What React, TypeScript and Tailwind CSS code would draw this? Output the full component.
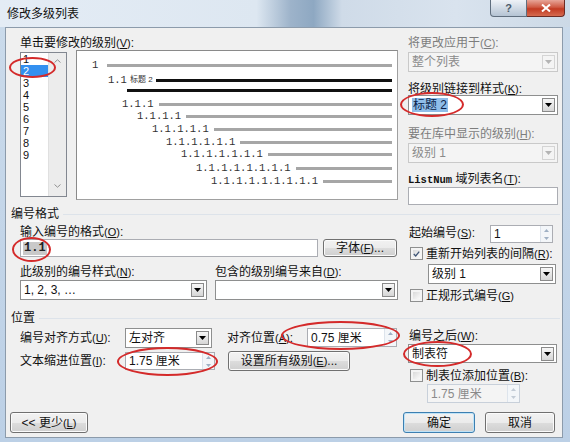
import React from "react";

const FONT = "font-['Liberation_Sans','Noto_Sans_CJK_SC',sans-serif]";

function Acc({ k }: { k: string }) {
  return (
    <span className="text-[11px]">
      (<span className="underline">{k}</span>)
    </span>
  );
}

function Label({
  text,
  k,
  disabled,
  className = "",
  colon = true,
}: {
  text: React.ReactNode;
  k: string;
  disabled?: boolean;
  className?: string;
  colon?: boolean;
}) {
  return (
    <div
      className={`h-[12px] leading-[12px] text-[12px] whitespace-nowrap ${
        disabled ? "text-[#7d7d7d]" : "text-[#111]"
      } ${className}`}
    >
      {text}
      <Acc k={k} />
      {colon ? ":" : ""}
    </div>
  );
}

function DropBtn({ disabled }: { disabled?: boolean }) {
  return (
    <div
      className={`w-[13px] h-[14px] mr-[2px] shrink-0 flex items-center justify-center border ${
        disabled
          ? "border-[#d4d4d4] bg-[#f4f4f4]"
          : "border-[#8a8a8a] bg-linear-to-b from-[#f7f7f7] to-[#d6d6d6]"
      }`}
    >
      <svg width="7" height="4" viewBox="0 0 7 4">
        <path d="M0 0H7L3.5 4Z" fill={disabled ? "#b4b4b4" : "#000"} />
      </svg>
    </div>
  );
}

function Combo({
  w,
  h,
  children,
  disabled,
  className = "",
}: {
  w: string;
  h: string;
  children?: React.ReactNode;
  disabled?: boolean;
  className?: string;
}) {
  return (
    <div
      className={`${w} ${h} ${className} shrink-0 flex items-center border ${
        disabled
          ? "border-[#c9c9c9] bg-[#f4f4f4] text-[#8a8a8a]"
          : "border-[#8e8f8f] bg-white text-[#111]"
      }`}
    >
      <div className="flex-1 pl-[3px] text-[12px] leading-[14px] whitespace-nowrap overflow-hidden">
        {children}
      </div>
      <DropBtn disabled={disabled} />
    </div>
  );
}

function Spin({
  w,
  h,
  text,
  disabled,
  className = "",
}: {
  w: string;
  h: string;
  text: string;
  disabled?: boolean;
  className?: string;
}) {
  const c = disabled ? "#c3ccd6" : "#9fb0c4";
  return (
    <div
      className={`${w} ${h} ${className} shrink-0 flex items-center border ${
        disabled
          ? "border-[#c8d0da] bg-[#f4f4f4] text-[#8a8a8a]"
          : "border-[#abadb3] bg-white text-[#111]"
      }`}
    >
      <div className="flex-1 pl-[3px] text-[12px] leading-[12px] whitespace-nowrap overflow-hidden">
        {text}
      </div>
      <div className="w-[12px] h-full flex flex-col border-l border-[#dde4ec] bg-[#f3f6f9]">
        <div className="flex-1 flex items-center justify-center">
          <svg width="5" height="3" viewBox="0 0 5 3">
            <path d="M0 3H5L2.5 0Z" fill={c} />
          </svg>
        </div>
        <div className="flex-1 flex items-center justify-center">
          <svg width="5" height="3" viewBox="0 0 5 3">
            <path d="M0 0H5L2.5 3Z" fill={c} />
          </svg>
        </div>
      </div>
    </div>
  );
}

function Check({ checked }: { checked?: boolean }) {
  return (
    <div className="w-[13px] h-[13px] shrink-0 border border-[#8e8f8f] bg-[#f4f4f4] p-[2px]">
      <div className="w-full h-full bg-linear-to-br from-[#dadada] to-[#fafafa] flex items-center justify-center">
        {checked && (
          <svg width="9" height="8" viewBox="0 0 9 8">
            <path d="M1 4L3.5 6.5L8 1" stroke="#3f5576" strokeWidth="1.7" fill="none" />
          </svg>
        )}
      </div>
    </div>
  );
}

function Btn({
  w,
  h,
  children,
  def,
  className = "",
}: {
  w: string;
  h: string;
  children: React.ReactNode;
  def?: boolean;
  className?: string;
}) {
  return (
    <div
      className={`${w} ${h} ${className} shrink-0 rounded-[3px] border ${
        def
          ? "border-[#3c7fb1] shadow-[inset_0_0_0_1px_#bfe3f7]"
          : "border-[#707070] shadow-[inset_0_0_0_1px_#fbfbfb]"
      } bg-[linear-gradient(#f2f2f2,#ebebeb_50%,#dddddd_50%,#cfcfcf)] flex items-center justify-center text-[12px] leading-[12px] text-[#111] whitespace-nowrap`}
    >
      {children}
    </div>
  );
}

function Header({ text, className }: { text: string; className: string }) {
  return (
    <div className={`flex items-center h-[12px] ml-[5px] mr-[2px] ${className}`}>
      <div className="text-[12px] leading-[12px] text-[#111]">{text}</div>
      <div className="flex-1 h-px bg-[#dde3ea] ml-[4px]" />
    </div>
  );
}

function LevelRow({
  mt,
  pl,
  text,
}: {
  mt: string;
  pl: string;
  text: string;
}) {
  return (
    <div className={`flex items-center h-[12px] pr-[5px] ${mt} ${pl}`}>
      <span className="font-['Liberation_Mono',monospace] text-[10.5px] leading-[12px] text-[#333] whitespace-nowrap">
        {text}
      </span>
      <div className="flex-1 ml-[5px] h-[3px] bg-[#a6a6a6]" />
    </div>
  );
}

export default function App() {
  const ellipses = [
    "left-[9px] top-[57px] w-[47px] h-[21px]",
    "left-[400px] top-[92px] w-[64px] h-[25px]",
    "left-[12px] top-[237px] w-[39px] h-[25px]",
    "left-[281px] top-[321px] w-[119px] h-[29px]",
    "left-[117px] top-[347px] w-[101px] h-[29px]",
    "left-[403px] top-[341px] w-[69px] h-[26px]",
  ];

  return (
    <div
      className={`relative w-[570px] h-[442px] overflow-hidden bg-linear-to-b from-[#cbdbeb] to-[#bcd0e6] ${FONT} text-[12px] text-[#111]`}
    >
      {/* Title bar */}
      <div className="h-[27px] flex items-start bg-[linear-gradient(90deg,#e4ecf5_0%,#dde7f1_45%,#9db3ca_51%,#8ea8c2_55%,#cfdbe8_60%,#d9e3ee_80%,#ccd9e6_100%)]">
        <div className="ml-[7px] mt-[8px] leading-[12px] text-[12px] text-[#111]">
          修改多级列表
        </div>
        <div className="ml-auto mr-[5px] flex">
          <div className="w-[37px] h-[17px] border border-t-0 border-[#5f6e7e] rounded-bl-[4px] bg-linear-to-b from-[#eef2f7] to-[#b4c3d3] flex items-center justify-center text-[11px] font-bold text-[#4b5a6a] leading-[11px]">
            ?
          </div>
          <div className="w-[38px] h-[17px] border border-t-0 border-l-0 border-[#6d2b23] rounded-br-[4px] bg-[linear-gradient(#e7a598,#cf5a44_45%,#c23a22_55%,#d56a4f)] flex items-center justify-center">
            <svg width="10" height="8" viewBox="0 0 10 8">
              <path d="M1 0.5L9 7.5M9 0.5L1 7.5" stroke="#fff" strokeWidth="2" />
            </svg>
          </div>
        </div>
      </div>

      {/* Dialog body */}
      <div className="ml-[5px] w-[558px] h-[411px] border border-[#8c9bab] bg-[#f0f0f0] flex flex-col">
        {/* Top section */}
        <div className="flex items-start mt-[9px] ml-[14px]">
          <div className="w-[378px] shrink-0">
            <Label text="单击要修改的级别" k="V" />
            <div className="flex items-start mt-[1px]">
              <div className="mt-[2px] w-[47px] h-[145px] border border-[#828790] bg-white flex">
                <div className="w-[27px] flex flex-col">
                  {["1", "2", "3", "4", "5", "6", "7", "8", "9"].map((n) => (
                    <div
                      key={n}
                      className={`h-[12px] leading-[12px] pl-[2px] text-[11px] ${
                        n === "2" ? "bg-[#3390f0] text-white" : "text-[#111]"
                      }`}
                    >
                      {n}
                    </div>
                  ))}
                </div>
                <div className="flex-1 bg-[#ececec] border-l border-[#e0e0e0] flex flex-col items-center justify-between pt-[6px] pb-[8px]">
                  <svg width="7" height="4" viewBox="0 0 7 4">
                    <path d="M0.5 3.5L3.5 0.8L6.5 3.5" stroke="#909090" strokeWidth="1" fill="none" />
                  </svg>
                  <svg width="7" height="4" viewBox="0 0 7 4">
                    <path d="M0.5 0.5L3.5 3.2L6.5 0.5" stroke="#909090" strokeWidth="1" fill="none" />
                  </svg>
                </div>
              </div>
              <div className="ml-[9px] w-[322px] h-[150px] border border-[#a0a0a0] border-t-[#8a8a8a] border-l-[#8a8a8a] bg-white flex flex-col">
                <div className="flex items-center h-[12px] mt-[8px] pl-[15px] pr-[5px]">
                  <span className="font-['Liberation_Mono',monospace] text-[10.5px] leading-[12px] text-[#333]">
                    1
                  </span>
                  <div className="flex-1 ml-[9px] h-[3px] bg-[#a6a6a6]" />
                </div>
                <div className="flex items-center h-[12px] mt-[3px] pl-[31px] pr-[5px]">
                  <span className="font-['Liberation_Mono',monospace] text-[10.5px] leading-[12px] text-[#333]">
                    1.1
                  </span>
                  <span className="ml-[3px] text-[8px] leading-[12px] text-[#333] whitespace-nowrap">
                    标题 2
                  </span>
                  <div className="flex-1 ml-[3px] h-[3px] bg-[#111]" />
                </div>
                <div className="flex items-center h-[4px] mt-[2px] pl-[50px] pr-[5px]">
                  <div className="flex-1 h-[3px] bg-[#111]" />
                </div>
                <LevelRow mt="mt-[6px]" pl="pl-[45px]" text="1.1.1" />
                <LevelRow mt="mt-[0px]" pl="pl-[60px]" text="1.1.1.1" />
                <LevelRow mt="mt-[1px]" pl="pl-[75px]" text="1.1.1.1.1" />
                <LevelRow mt="mt-[1px]" pl="pl-[89px]" text="1.1.1.1.1.1" />
                <LevelRow mt="mt-[0px]" pl="pl-[104px]" text="1.1.1.1.1.1.1" />
                <LevelRow mt="mt-[2px]" pl="pl-[119px]" text="1.1.1.1.1.1.1.1" />
                <LevelRow mt="mt-[1px]" pl="pl-[134px]" text="1.1.1.1.1.1.1.1.1" />
              </div>
            </div>
          </div>

          <div className="ml-[10px] w-[150px] shrink-0 flex flex-col">
            <Label text="将更改应用于" k="C" disabled />
            <Combo w="w-[150px]" h="h-[20px]" className="mt-[3px]" disabled>
              整个列表
            </Combo>
            <Label text="将级别链接到样式" k="K" className="mt-[11px]" />
            <Combo w="w-[150px]" h="h-[20px]" className="mt-[0px]">
              <span className="bg-[#8fbde9] text-[#0b1f4a] px-[1px]">标题 2</span>
            </Combo>
            <Label text="要在库中显示的级别" k="H" disabled className="mt-[13px]" />
            <Combo w="w-[150px]" h="h-[20px]" className="mt-[3px]" disabled>
              级别 1
            </Combo>
            <Label
              text={
                <>
                  <span className="font-['Liberation_Mono',monospace] text-[10.5px] font-bold">ListNum</span>{" "}
                  域列表名
                </>
              }
              k="T"
              className="mt-[10px]"
            />
            <div className="mt-[2px] w-[150px] h-[18px] border border-[#abadb3] bg-white" />
          </div>
        </div>

        {/* 编号格式 */}
        <Header text="编号格式" className="mt-[3px]" />
        <div className="flex items-start ml-[14px]">
          <div className="w-[380px] shrink-0 flex flex-col">
            <Label text="输入编号的格式" k="O" className="mt-[6px]" />
            <div className="flex mt-[1px]">
              <div className="w-[298px] h-[18px] border border-[#abadb3] bg-white flex items-center pl-[2px]">
                <span className="bg-[#c9c9c9] text-[12px] leading-[13px] px-[1px] text-[#222] font-['Liberation_Mono',monospace] font-bold">
                  1.1
                </span>
                <span className="text-[8px] leading-[8px] text-[#888] ml-[1px]">·</span>
              </div>
              <Btn w="w-[74px]" h="h-[18px]" className="ml-[5px]">
                字体<Acc k="F" />...
              </Btn>
            </div>
            <div className="flex mt-[9px]">
              <Label text="此级别的编号样式" k="N" className="w-[195px]" />
              <Label text="包含的级别编号来自" k="D" />
            </div>
            <div className="flex mt-[2px]">
              <Combo w="w-[187px]" h="h-[20px]">
                1, 2, 3, …
              </Combo>
              <Combo w="w-[183px]" h="h-[20px]" className="ml-[8px]" />
            </div>
          </div>

          <div className="ml-[8px] w-[150px] shrink-0 flex flex-col">
            <div className="flex items-start mt-[5px]">
              <Label text="起始编号" k="S" className="w-[81px] ml-[1px] mt-[2px]" />
              <Spin w="w-[63px]" h="h-[18px]" text="1" />
            </div>
            <div className="flex items-center mt-[4px] ml-[2px] h-[13px]">
              <Check checked />
              <Label text="重新开始列表的间隔" k="R" className="ml-[3px]" />
            </div>
            <Combo w="w-[128px]" h="h-[20px]" className="mt-[4px] ml-[20px]">
              级别 1
            </Combo>
            <div className="flex items-center mt-[5px] ml-[2px] h-[13px]">
              <Check />
              <Label text="正规形式编号" k="G" colon={false} className="ml-[3px]" />
            </div>
          </div>
        </div>

        {/* 位置 */}
        <Header text="位置" className="mt-[10px]" />
        <div className="flex items-start ml-[14px]">
          <div className="w-[380px] shrink-0 flex flex-col">
            <div className="flex items-center mt-[3px] h-[21px]">
              <Label text="编号对齐方式" k="U" className="w-[105px]" />
              <Combo w="w-[87px]" h="h-[20px]">
                左对齐
              </Combo>
              <Label text="对齐位置" k="A" className="ml-[15px] w-[80px]" />
              <Spin w="w-[90px]" h="h-[19px]" text="0.75 厘米" />
            </div>
            <div className="flex items-center mt-[3px] h-[20px]">
              <Label text="文本缩进位置" k="I" className="w-[105px]" />
              <Spin w="w-[90px]" h="h-[18px]" text="1.75 厘米" />
              <Btn w="w-[122px]" h="h-[20px]" className="ml-[13px]">
                设置所有级别<Acc k="E" />...
              </Btn>
            </div>
          </div>

          <div className="ml-[8px] w-[150px] shrink-0 flex flex-col">
            <Label text="编号之后" k="W" className="mt-[6px] ml-[1px]" />
            <Combo w="w-[149px]" h="h-[19px]" className="mt-[2px]">
              制表符
            </Combo>
            <div className="flex items-center mt-[6px] ml-[2px] h-[13px]">
              <Check />
              <Label text="制表位添加位置" k="B" className="ml-[3px]" />
            </div>
            <Spin w="w-[93px]" h="h-[19px]" text="1.75 厘米" disabled className="mt-[2px] ml-[19px]" />
          </div>
        </div>

        {/* Bottom buttons */}
        <div className="flex items-start mt-auto mb-[4px]">
          <Btn w="w-[78px]" h="h-[21px]" className="ml-[4px]">
            &lt;&lt; 更少<Acc k="L" />
          </Btn>
          <Btn w="w-[72px]" h="h-[21px]" def className="ml-auto">
            确定
          </Btn>
          <Btn w="w-[70px]" h="h-[21px]" className="ml-[10px] mr-[7px]">
            取消
          </Btn>
        </div>
      </div>

      {/* Red annotation ellipses */}
      {ellipses.map((c, i) => (
        <div
          key={i}
          className={`absolute ${c} rounded-[50%] border-2 border-[#d42a2a] pointer-events-none`}
        />
      ))}
    </div>
  );
}
